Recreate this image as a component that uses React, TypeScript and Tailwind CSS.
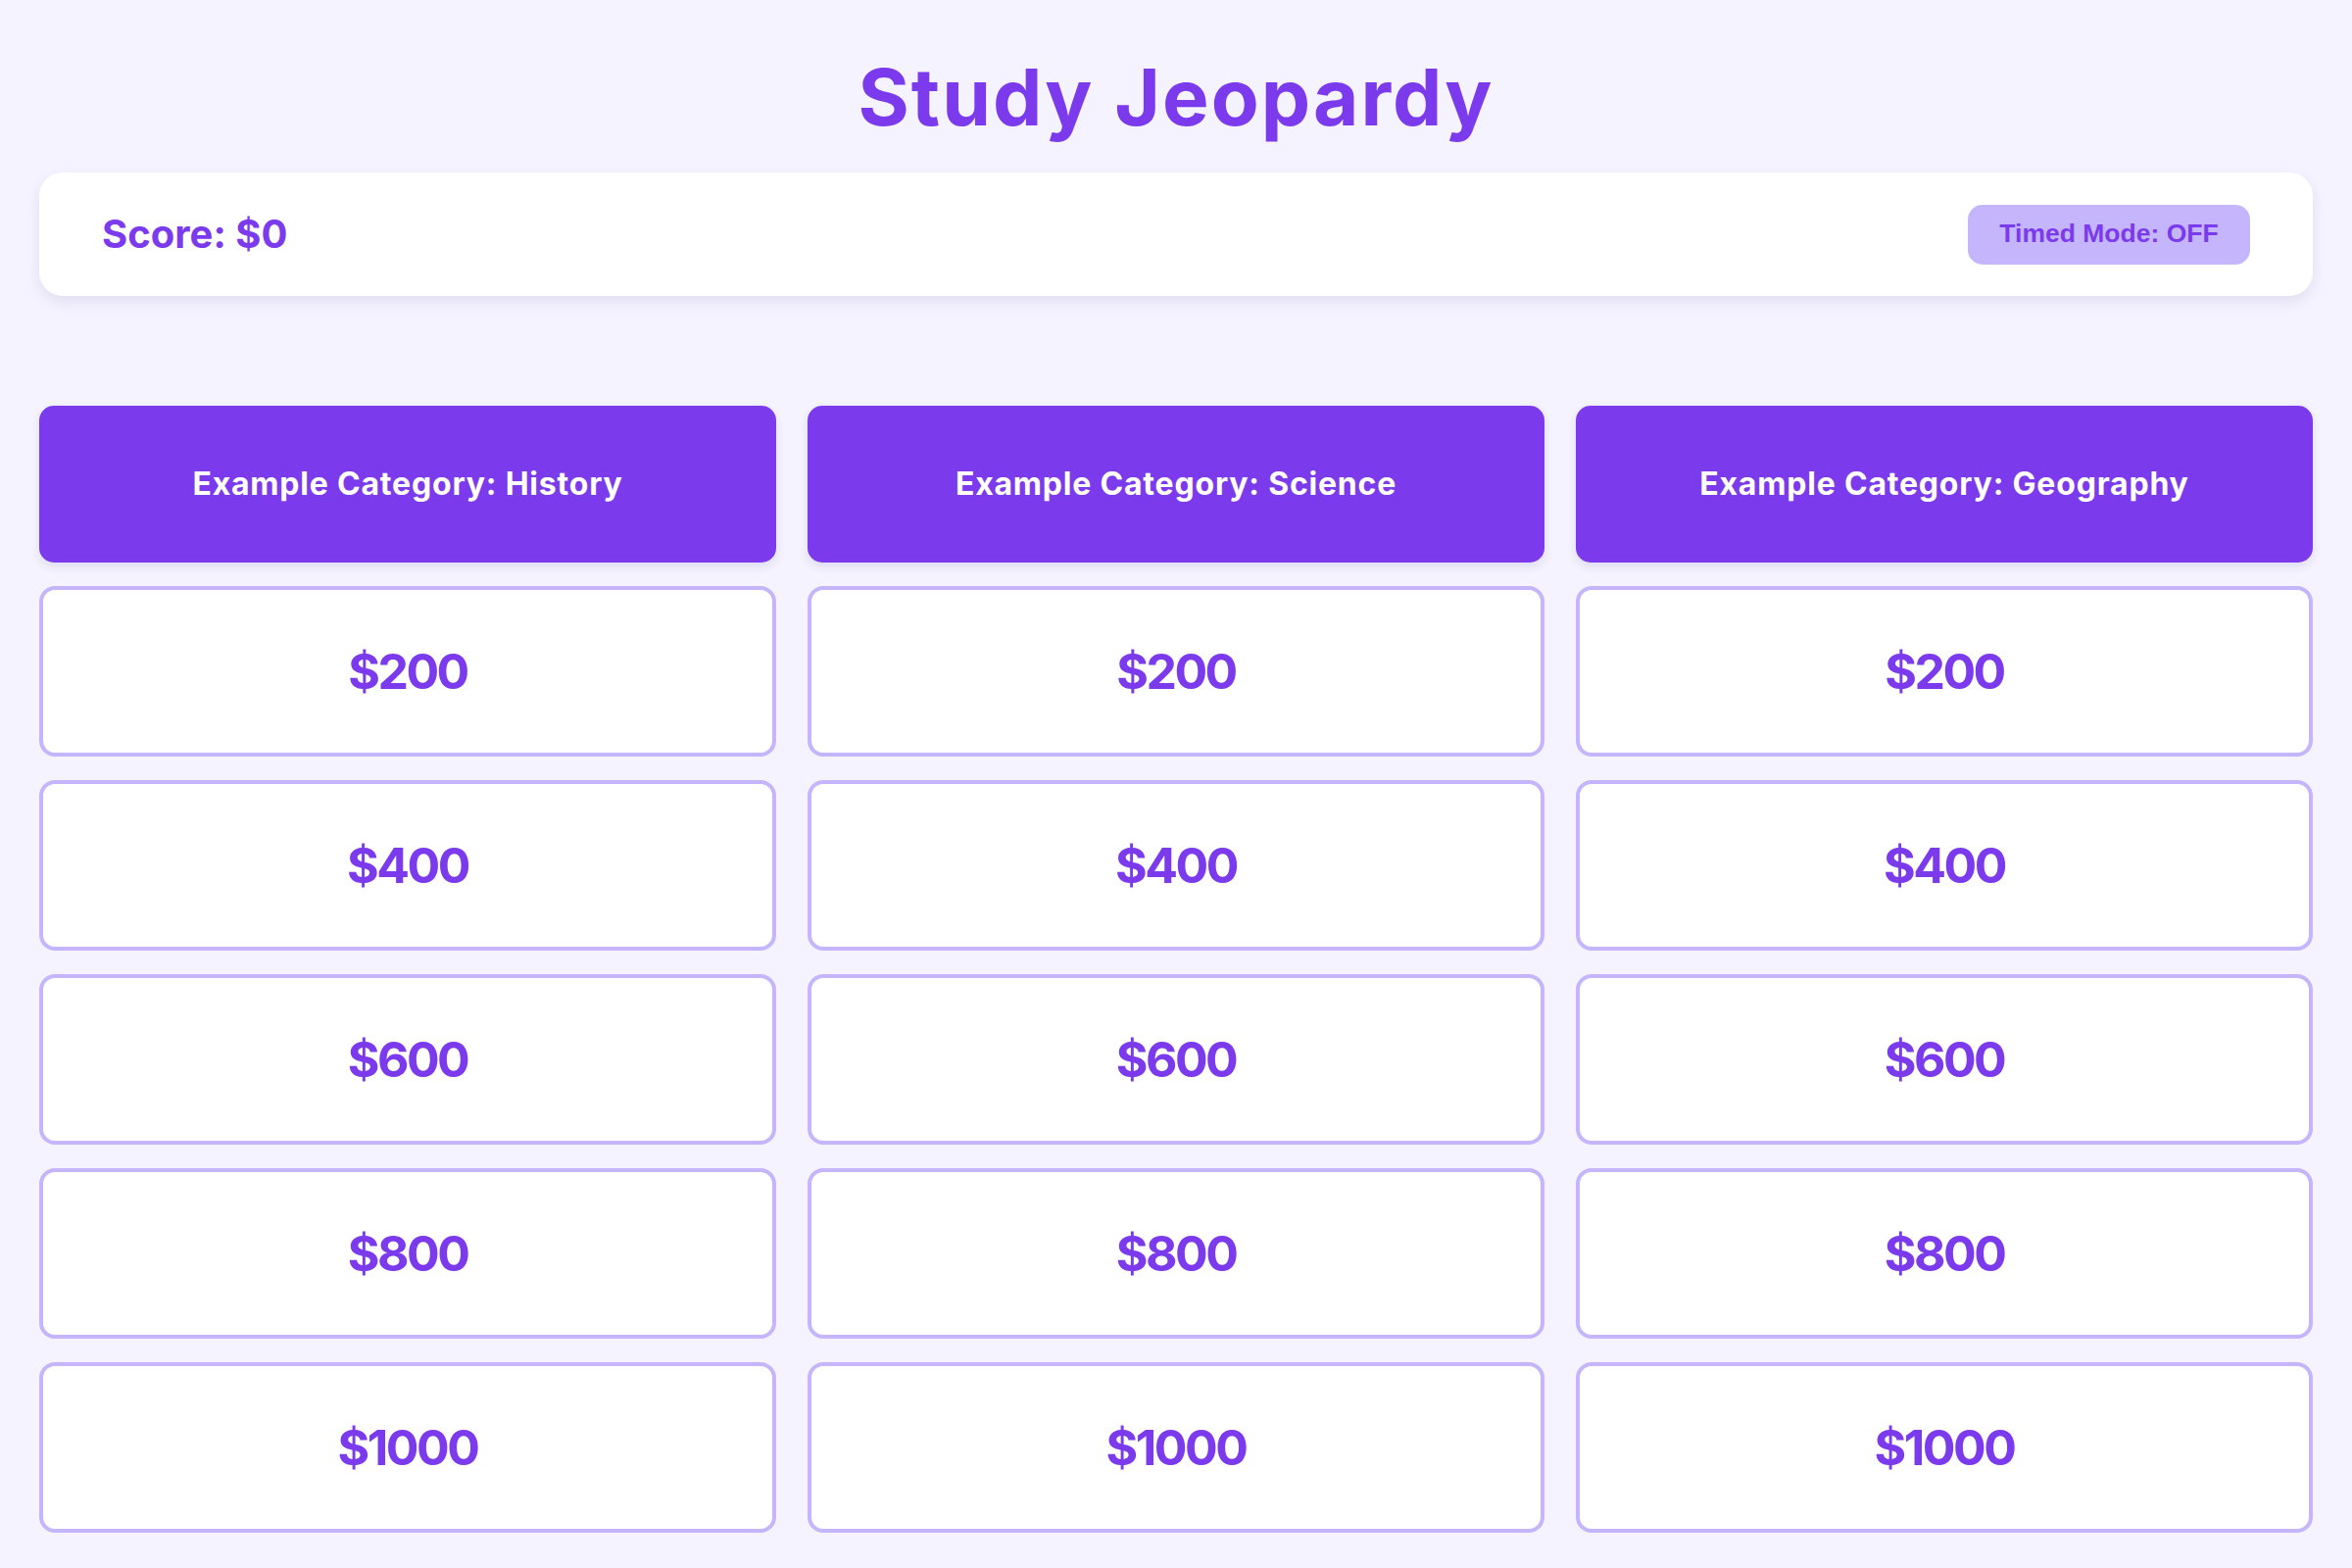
const categories = [
  'Example Category: History',
  'Example Category: Science',
  'Example Category: Geography',
]

const values = [200, 400, 600, 800, 1000]

export default function App() {
  return (
    <div className="min-h-screen bg-[#f5f3ff] px-[40px] pt-[59px] pb-[40px] font-['Inter',sans-serif]">
      <h1 className="text-center text-[80px] leading-none font-bold tracking-[2px] text-[#7c3aed]">
        Study Jeopardy
      </h1>

      <div className="mt-[37px] flex h-[126px] items-center justify-between rounded-[24px] bg-white px-[64px] shadow-[0_6px_14px_rgba(60,40,120,0.10)]">
        <span className="text-[40px] font-bold text-[#7c3aed]">Score: $0</span>
        <button className="h-[61px] w-[288px] rounded-[15px] bg-[#c4b5fd] font-['Liberation_Sans',Arial,sans-serif] text-[26.5px] font-bold text-[#7c3aed]">
          Timed Mode: OFF
        </button>
      </div>

      <div className="mt-[112px] grid grid-cols-3 gap-x-[32px] gap-y-[24px]">
        {categories.map(name => (
          <div
            key={name}
            className="flex h-[160px] items-center justify-center rounded-[15px] bg-[#7c3aed] text-[32px] font-bold tracking-[0.8px] text-white shadow-[0_4px_10px_rgba(60,40,120,0.12)]"
          >
            {name}
          </div>
        ))}
        {values.map(value =>
          categories.map(name => (
            <button
              key={name + value}
              className="flex h-[174px] items-center justify-center rounded-[16px] border-[4px] border-[#c4b5fd] bg-white text-[50px] font-bold tracking-[-2.5px] text-[#7c3aed]"
            >
              ${value}
            </button>
          )),
        )}
      </div>
    </div>
  )
}
